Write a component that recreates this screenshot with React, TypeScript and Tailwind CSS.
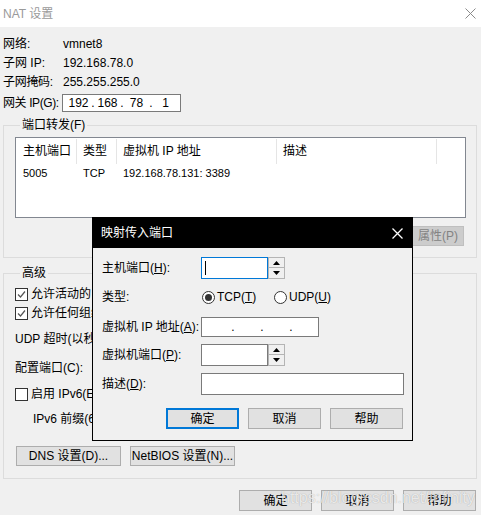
import React from "react";

const font = "font-['Liberation_Sans','Noto_Sans_CJK_SC',sans-serif]";

function XIcon({ color, width = 1 }: { color: string; width?: number }) {
  return (
    <svg width="11" height="11" viewBox="0 0 11 11">
      <path d="M0.5 0.5 L10.5 10.5 M10.5 0.5 L0.5 10.5" stroke={color} strokeWidth={width} fill="none" />
    </svg>
  );
}

function Checkbox({ checked }: { checked?: boolean }) {
  return (
    <div className="flex h-[13px] w-[13px] shrink-0 items-center justify-center border border-[#333] bg-white">
      {checked && (
        <svg width="9" height="9" viewBox="0 0 9 9">
          <path d="M1 4.5 L3.5 7 L8 1.5" stroke="#555" strokeWidth="1.2" fill="none" />
        </svg>
      )}
    </div>
  );
}

function Radio({ checked }: { checked?: boolean }) {
  return (
    <div className="flex h-[13px] w-[13px] shrink-0 items-center justify-center rounded-full border border-[#333] bg-white">
      {checked && <div className="h-[7px] w-[7px] rounded-full bg-[#333]" />}
    </div>
  );
}

function Spinner() {
  return (
    <div className="flex h-[22px] w-[17px] shrink-0 flex-col border border-[#b4b4b4] bg-[#f0f0f0]">
      <div className="flex h-[10px] items-center justify-center border-b border-[#b4b4b4]">
        <svg width="7" height="4" viewBox="0 0 7 4">
          <polygon points="0,4 7,4 3.5,0" fill="#000" />
        </svg>
      </div>
      <div className="flex flex-1 items-center justify-center">
        <svg width="7" height="4" viewBox="0 0 7 4">
          <polygon points="0,0 7,0 3.5,4" fill="#000" />
        </svg>
      </div>
    </div>
  );
}

function Btn({ label, primary, w = "w-[73px]", h = "h-[21px]" }: { label: string; primary?: boolean; w?: string; h?: string }) {
  return (
    <div
      className={`flex ${w} ${h} items-center justify-center whitespace-nowrap bg-[#e1e1e1] text-[12px] leading-none ${
        primary ? "border-2 border-[#0078d7]" : "border border-[#adadad]"
      }`}
    >
      {label}
    </div>
  );
}

export default function App() {
  const ipSeg = (v: string) => <span className="w-[25px] shrink-0 text-center">{v}</span>;
  const ipDot = <span className="w-[4px] shrink-0 text-center">.</span>;

  return (
    <div className={`relative h-[515px] w-[481px] overflow-hidden whitespace-nowrap bg-[#f0f0f0] text-[12px] leading-[16px] text-black ${font}`}>
      {/* title bar */}
      <div className="flex h-[27px] items-center justify-between bg-white pl-[3px] pr-[5px]">
        <span className="text-[#9a9a9a]">NAT 设置</span>
        <XIcon color="#8a8a8a" />
      </div>

      {/* info rows */}
      <div className="pl-[3px] pt-[7px]">
        <div className="flex h-[19px] items-center">
          <span className="w-[60px] shrink-0">网络:</span>
          <span>vmnet8</span>
        </div>
        <div className="flex h-[19px] items-center">
          <span className="w-[60px] shrink-0">子网 IP:</span>
          <span>192.168.78.0</span>
        </div>
        <div className="flex h-[19px] items-center">
          <span className="w-[60px] shrink-0 tracking-[-0.3px]">子网掩码:</span>
          <span>255.255.255.0</span>
        </div>
        <div className="mt-[2px] flex h-[20px] items-center">
          <span className="w-[59px] shrink-0 tracking-[-0.4px]">网关 IP(G):</span>
          <div className="flex h-[18px] w-[119px] shrink-0 items-center border border-[#7a7a7a] bg-white pl-[3px]">
            {ipSeg("192")}
            {ipDot}
            {ipSeg("168")}
            {ipDot}
            {ipSeg("78")}
            {ipDot}
            {ipSeg("1")}
          </div>
        </div>
      </div>

      {/* port forwarding */}
      <fieldset className="ml-[3px] mt-[4px] w-[474px] border border-[#dcdcdc] pb-[11px] pl-[11px]">
        <legend className="ml-[5px] px-[2px] leading-[16px]">端口转发(F)</legend>
        <div className="mt-[4px] h-[81px] w-[451px] border border-[#828790] bg-white">
          <div className="flex h-[26px] pt-[1px]">
            <div className="w-[61px] border-r border-[#e5e5e5] pl-[7px] pt-[4px]">主机端口</div>
            <div className="w-[40px] border-r border-[#e5e5e5] pl-[6px] pt-[4px]">类型</div>
            <div className="w-[160px] border-r border-[#e5e5e5] pl-[6px] pt-[4px]">虚拟机 IP 地址</div>
            <div className="w-[160px] border-r border-[#e5e5e5] pl-[6px] pt-[4px]">描述</div>
          </div>
          <div className="flex h-[17px] items-center text-[11px]">
            <div className="w-[61px] pl-[7px]">5005</div>
            <div className="w-[40px] pl-[6px]">TCP</div>
            <div className="w-[160px] pl-[6px]">192.168.78.131: 3389</div>
          </div>
        </div>
        <div className="mt-[8px] flex justify-end pr-[12px]">
          <div className="flex h-[20px] w-[52px] items-center justify-center border border-[#bfbfbf] bg-[#cccccc] text-[#838383]">
            属性(P)
          </div>
        </div>
      </fieldset>

      {/* advanced */}
      <fieldset className="ml-[3px] mt-[7px] w-[474px] border border-[#dcdcdc] pb-[12px] pl-[11px]">
        <legend className="ml-[5px] px-[2px] leading-[16px]">高级</legend>
        <div className="mt-[4px] flex h-[18px] items-center gap-[3px]">
          <Checkbox checked />
          <span>允许活动的 FTP(T)</span>
        </div>
        <div className="mt-[1px] flex h-[18px] items-center gap-[3px]">
          <Checkbox checked />
          <span>允许任何组织唯一标识符(O)</span>
        </div>
        <div className="mt-[8px] flex h-[18px] items-center">UDP 超时(以秒为单位)(U):</div>
        <div className="mt-[11px] flex h-[18px] items-center">配置端口(C):</div>
        <div className="mt-[8px] flex h-[18px] items-center gap-[3px]">
          <Checkbox />
          <span>启用 IPv6(E)</span>
        </div>
        <div className="mt-[7px] flex h-[18px] items-center pl-[18px]">IPv6 前缀(6):</div>
        <div className="mt-[18px] flex gap-[9px] pl-[1px]">
          <Btn label="DNS 设置(D)..." w="w-[105px]" h="h-[20px]" />
          <Btn label="NetBIOS 设置(N)..." w="w-[105px]" h="h-[20px]" />
        </div>
      </fieldset>

      {/* bottom buttons */}
      <div className="mt-[11px] flex justify-end gap-[9px] pr-[5px]">
        <Btn label="确定" />
        <Btn label="取消" />
        <Btn label="帮助" />
      </div>

      {/* watermark */}
      <div className="pointer-events-none absolute left-[281px] top-[488px] text-[16px] leading-[20px] text-[rgba(255,255,255,0.75)] [text-shadow:0_0_1px_rgba(0,0,0,0.3)]">
        https://blog.csdn.net/Infinity
      </div>

      {/* dialog */}
      <div className="absolute left-[92px] top-[217px] h-[224px] w-[321px] border border-black bg-[#f0f0f0]">
        <div className="flex h-[30px] items-center justify-between bg-black pl-[8px] pr-[9px] text-white">
          <span>映射传入端口</span>
          <XIcon color="#fff" width={1.3} />
        </div>
        <div className="pl-[9px] pt-[9px]">
          <div className="flex h-[22px] items-center">
            <span className="w-[99px] shrink-0">
              主机端口(<span className="underline">H</span>):
            </span>
            <div className="flex h-[22px] w-[67px] shrink-0 items-center border border-[#0078d7] bg-white pl-[3px]">
              <div className="h-[14px] w-[1px] bg-black" />
            </div>
            <Spinner />
          </div>
          <div className="mt-[8px] flex h-[20px] items-center">
            <span className="w-[99px] shrink-0">类型:</span>
            <div className="flex w-[73px] shrink-0 items-center gap-[2px] pl-[1px]">
              <Radio checked />
              <span>
                TCP(<span className="underline">T</span>)
              </span>
            </div>
            <div className="flex items-center gap-[2px]">
              <Radio />
              <span>
                UDP(<span className="underline">U</span>)
              </span>
            </div>
          </div>
          <div className="mt-[10px] flex h-[20px] items-center">
            <span className="w-[99px] shrink-0">
              虚拟机 IP 地址(<span className="underline">A</span>):
            </span>
            <div className="flex h-[20px] w-[118px] shrink-0 items-center border border-[#7a7a7a] bg-white pl-[4px]">
              {ipSeg("")}
              {ipDot}
              {ipSeg("")}
              {ipDot}
              {ipSeg("")}
              {ipDot}
              {ipSeg("")}
            </div>
          </div>
          <div className="mt-[7px] flex h-[22px] items-center">
            <span className="w-[99px] shrink-0">
              虚拟机端口(<span className="underline">P</span>):
            </span>
            <div className="h-[22px] w-[67px] shrink-0 border border-[#7a7a7a] bg-white" />
            <Spinner />
          </div>
          <div className="mt-[7px] flex h-[22px] items-center">
            <span className="w-[99px] shrink-0">
              描述(<span className="underline">D</span>):
            </span>
            <div className="h-[22px] w-[203px] shrink-0 border border-[#7a7a7a] bg-white" />
          </div>
          <div className="mt-[13px] flex justify-end gap-[9px] pr-[9px]">
            <Btn label="确定" primary />
            <Btn label="取消" />
            <Btn label="帮助" />
          </div>
        </div>
      </div>
    </div>
  );
}
